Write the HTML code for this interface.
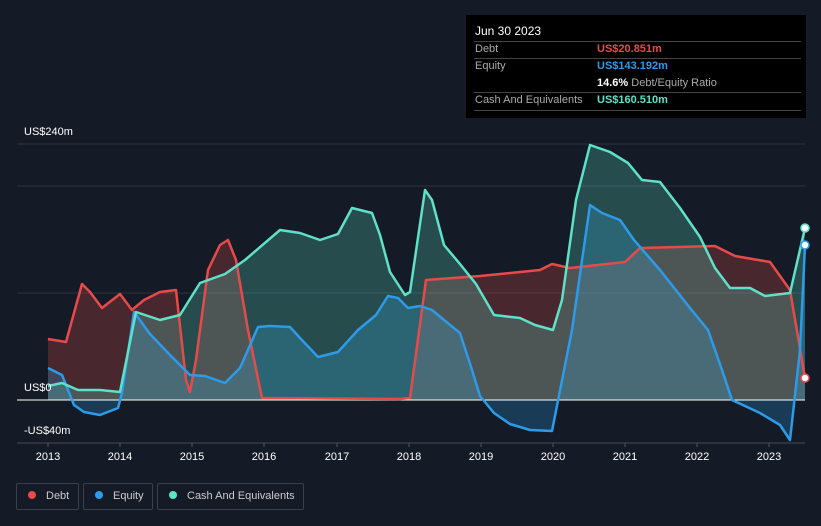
<!DOCTYPE html><html><head><style>
body{margin:0;width:821px;height:526px;background:#151b26;font-family:"Liberation Sans",sans-serif;overflow:hidden;position:relative}
.t{position:absolute;font-size:11px;color:#fff}
.tip{position:absolute;left:466px;top:15px;width:340px;height:103px;background:#000}
.tip div{position:absolute;font-size:11px;white-space:nowrap}
.hl{position:absolute;left:8px;width:327px;height:1px;background:#444}
.lg{position:absolute;top:483px;height:27px;border:1px solid #3a404b;border-radius:2px;color:#ccc;font-size:11px;line-height:25px;box-sizing:border-box;white-space:nowrap}
.lg i{display:inline-block;width:8px;height:8px;border-radius:50%;margin:0 10px 0 11px;vertical-align:0px}
</style></head><body>
<svg width="821" height="526" style="position:absolute;left:0;top:0">
<line x1="17" y1="144" x2="805" y2="144" stroke="#2c3340"/>
<line x1="17" y1="186" x2="805" y2="186" stroke="#2c3340"/>
<line x1="17" y1="293" x2="805" y2="293" stroke="#2c3340"/>
<line x1="17" y1="443" x2="805" y2="443" stroke="#444a55"/>
<g fill-opacity="0.25">
<polygon fill="#e84a4a" points="48,400 48,339 66,342 82,284 90,292 102,308 120,294 132,310 144,300 160,292 176,290 186,380 190,392 196,360 208,270 220,245 228,240 236,260 248,330 262,398 400,399 410,398 426,280 480,276 540,270 552,264 570,268 625,262 640,248 715,246 735,256 770,262 790,290 805,378 805,400"/>
<polygon fill="#2d9be8" points="48,400 48,368 62,375 74,405 84,412 100,415 118,408 122,393 134,312 150,334 170,355 190,375 205,376 225,383 240,368 258,327 270,326 290,327 300,338 318,357 338,352 358,330 376,315 388,296 398,298 408,308 420,306 432,310 444,320 460,333 472,370 480,396 494,413 510,424 530,430 552,431 572,330 590,205 602,213 620,220 634,240 660,270 690,308 708,330 722,370 732,400 760,413 780,425 790,440 800,350 805,245 805,400"/>
<polygon fill="#5fe0c8" points="48,400 48,386 62,383 78,390 100,390 120,392 136,312 160,320 180,315 200,283 225,274 245,260 280,230 300,233 320,240 338,234 352,208 372,213 380,235 390,272 405,295 410,292 425,190 432,200 444,245 460,264 476,284 494,315 520,318 535,325 553,330 562,300 576,200 590,145 610,152 628,163 642,180 660,182 680,208 700,237 715,268 730,288 750,288 765,296 790,293 805,228 805,400"/>
</g>
<line x1="17" y1="400" x2="805" y2="400" stroke="#fff" stroke-width="1"/>
<g fill="none" stroke-width="2.5" stroke-linejoin="round">
<polyline stroke="#e84a4a" points="48,339 66,342 82,284 90,292 102,308 120,294 132,310 144,300 160,292 176,290 186,380 190,392 196,360 208,270 220,245 228,240 236,260 248,330 262,398 400,399 410,398 426,280 480,276 540,270 552,264 570,268 625,262 640,248 715,246 735,256 770,262 790,290 805,378"/>
<polyline stroke="#2d9be8" points="48,368 62,375 74,405 84,412 100,415 118,408 122,393 134,312 150,334 170,355 190,375 205,376 225,383 240,368 258,327 270,326 290,327 300,338 318,357 338,352 358,330 376,315 388,296 398,298 408,308 420,306 432,310 444,320 460,333 472,370 480,396 494,413 510,424 530,430 552,431 572,330 590,205 602,213 620,220 634,240 660,270 690,308 708,330 722,370 732,400 760,413 780,425 790,440 800,350 805,245"/>
<polyline stroke="#5fe0c8" points="48,386 62,383 78,390 100,390 120,392 136,312 160,320 180,315 200,283 225,274 245,260 280,230 300,233 320,240 338,234 352,208 372,213 380,235 390,272 405,295 410,292 425,190 432,200 444,245 460,264 476,284 494,315 520,318 535,325 553,330 562,300 576,200 590,145 610,152 628,163 642,180 660,182 680,208 700,237 715,268 730,288 750,288 765,296 790,293 805,228"/>
</g>
<circle cx="805" cy="378" r="4" fill="#fff" stroke="#e84a4a" stroke-width="1.5"/>
<circle cx="805" cy="245" r="4" fill="#fff" stroke="#2d9be8" stroke-width="1.5"/>
<circle cx="805" cy="228" r="4" fill="#fff" stroke="#5fe0c8" stroke-width="1.5"/>
<g stroke="#555" ><line x1="48" y1="443" x2="48" y2="447"/><line x1="120" y1="443" x2="120" y2="447"/><line x1="192" y1="443" x2="192" y2="447"/><line x1="264" y1="443" x2="264" y2="447"/><line x1="337" y1="443" x2="337" y2="447"/><line x1="409" y1="443" x2="409" y2="447"/><line x1="481" y1="443" x2="481" y2="447"/><line x1="553" y1="443" x2="553" y2="447"/><line x1="625" y1="443" x2="625" y2="447"/><line x1="697" y1="443" x2="697" y2="447"/><line x1="769" y1="443" x2="769" y2="447"/></g>
<g fill="#fff" font-size="11" text-anchor="middle" font-family="Liberation Sans"><text x="48" y="460">2013</text><text x="120" y="460">2014</text><text x="192" y="460">2015</text><text x="264" y="460">2016</text><text x="337" y="460">2017</text><text x="409" y="460">2018</text><text x="481" y="460">2019</text><text x="553" y="460">2020</text><text x="625" y="460">2021</text><text x="697" y="460">2022</text><text x="769" y="460">2023</text></g>
</svg>
<div class="t" style="left:24px;top:126px">US$240m</div>
<div class="t" style="left:24px;top:382px">US$0</div>
<div class="t" style="left:24px;top:425px">-US$40m</div>
<div class="tip">
<div style="left:9px;top:9px;color:#fff;font-size:12px">Jun 30 2023</div>
<div class="hl" style="top:26px"></div>
<div style="left:9px;top:28px;color:#aaa">Debt</div><div style="left:131px;top:28px;color:#e84a4a;font-weight:bold">US$20.851m</div>
<div class="hl" style="top:43px"></div>
<div style="left:9px;top:45px;color:#aaa">Equity</div><div style="left:131px;top:45px;color:#2d9be8;font-weight:bold">US$143.192m</div>
<div style="left:131px;top:62px;color:#aaa"><b style="color:#fff">14.6%</b> Debt/Equity Ratio</div>
<div class="hl" style="top:77px"></div>
<div style="left:9px;top:79px;color:#aaa">Cash And Equivalents</div><div style="left:131px;top:79px;color:#5fe0c8;font-weight:bold">US$160.510m</div>
<div class="hl" style="top:95px"></div>
</div>
<div class="lg" style="left:16px;width:63px"><i style="background:#e84a4a"></i>Debt</div>
<div class="lg" style="left:83px;width:70px"><i style="background:#2d9be8"></i>Equity</div>
<div class="lg" style="left:157px;width:147px"><i style="background:#5fe0c8"></i>Cash And Equivalents</div>
</body></html>
